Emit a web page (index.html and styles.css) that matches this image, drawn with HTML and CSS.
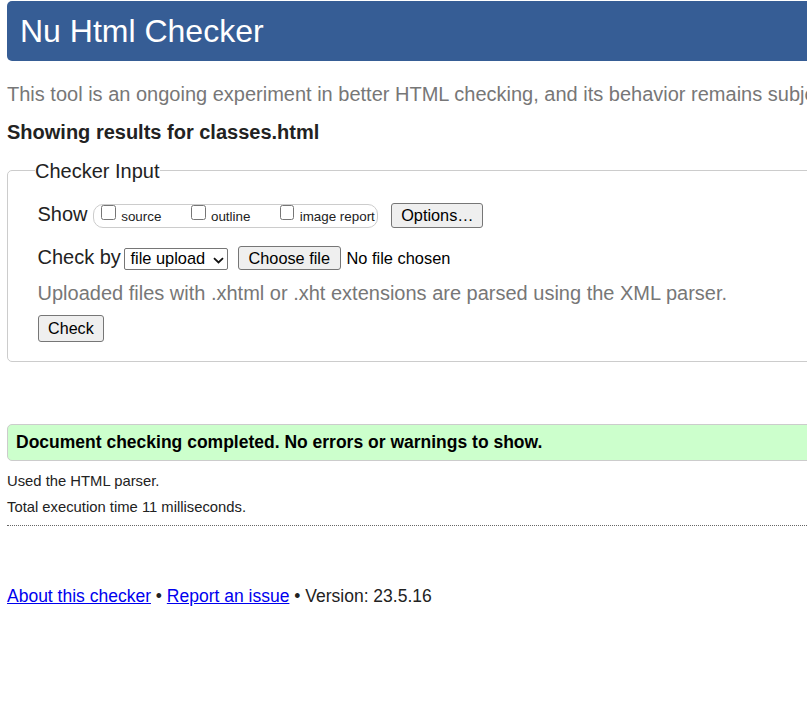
FILE: index.html
```html
<!DOCTYPE html>
<html lang="en">
<head>
<meta charset="utf-8">
<title>Showing results for classes.html - Nu Html Checker</title>
<link rel="stylesheet" href="styles.css">
</head>
<body>
<div class="page">
  <h1 class="title">Nu Html Checker</h1>
  <p class="intro">This tool is an ongoing experiment in better HTML checking, and its behavior remains subject to change</p>
  <p class="results-for">Showing results for classes.html</p>

  <fieldset class="checker">
    <legend class="legend">Checker Input</legend>

    <div class="row row-show">
      <span class="label">Show</span>
      <span class="group">
        <label class="opt opt-source"><span class="cb"></span>source</label>
        <label class="opt opt-outline"><span class="cb"></span>outline</label>
        <label class="opt opt-image"><span class="cb"></span>image report</label>
      </span>
      <button class="btn btn-options" type="button">Options…</button>
    </div>

    <div class="row row-checkby">
      <span class="label">Check by</span>
      <span class="select">file upload<svg class="chev" width="11" height="7" viewBox="0 0 11 7"><path d="M1 1.2 L5.5 5.5 L10 1.2" fill="none" stroke="#111" stroke-width="1.8"/></svg></span>
      <button class="btn btn-file" type="button">Choose file</button>
      <span class="nofile">No file chosen</span>
    </div>

    <p class="hint">Uploaded files with .xhtml or .xht extensions are parsed using the XML parser.</p>

    <div class="row row-submit">
      <button class="btn btn-check" type="button">Check</button>
    </div>
  </fieldset>

  <p class="success">Document checking completed. No errors or warnings to show.</p>
  <p class="meta meta-first">Used the HTML parser.</p>
  <p class="meta meta-second">Total execution time 11 milliseconds.</p>
  <hr class="dots">
  <p class="footer"><a href="#about">About this checker</a> • <a href="#report">Report an issue</a> • Version: 23.5.16</p>
</div>
</body>
</html>
```

FILE: styles.css
```css
html {
  overflow: hidden;
  background: #fff;
}

body {
  margin: 0;
  font-family: "Liberation Sans", Arial, sans-serif;
  color: #222;
}

.page {
  width: 1400px;
  margin: 1px 0 0 7px;
}

.title {
  margin: 0;
  height: 60px;
  padding-left: 13px;
  background: #365d95;
  color: #fff;
  font-size: 32px;
  font-weight: normal;
  line-height: 60px;
  border-radius: 5px;
}

.intro {
  margin: 21px 0 0;
  font-size: 20px;
  line-height: 24px;
  color: #777;
  white-space: nowrap;
}

.results-for {
  margin: 14.4px 0 0;
  font-size: 20px;
  line-height: 24px;
  font-weight: bold;
  color: #222;
}

.checker {
  margin: 14.3px 0 0;
  padding: 0 0 19.6px 29.5px;
  border: 1px solid #ccc;
  border-radius: 5px;
  min-width: 0;
}

.legend {
  margin-left: -2.5px;
  padding: 0;
  font-size: 20px;
  line-height: 24px;
  color: #222;
}

.row {
  display: flex;
  align-items: baseline;
}

.row-show {
  margin-top: 20px;
}

.row-checkby {
  margin-top: 18.5px;
}

.label {
  font-size: 20px;
  line-height: 23px;
}

.group {
  display: block;
  box-sizing: border-box;
  width: 285px;
  height: 23.4px;
  margin-left: 5.3px;
  padding: 0 0 0 7.4px;
  border: 1px solid #ccc;
  border-radius: 10px;
  font-size: 13.4px;
  line-height: 16px;
  white-space: nowrap;
}

.opt {
  display: inline-block;
}

.opt-source {
  width: 86px;
}

.opt-outline {
  width: 85px;
}

.cb {
  display: inline-block;
  box-sizing: border-box;
  width: 14.6px;
  height: 14.4px;
  margin: 0 5.4px 1.7px 0;
  border: 1px solid #767676;
  border-radius: 2.5px;
  background: #fff;
  vertical-align: baseline;
}

.btn {
  font-family: "Liberation Sans", Arial, sans-serif;
  color: #000;
  background: #efefef;
  border: 1px solid #767676;
  border-radius: 3px;
  margin: 0;
}

.btn-options {
  margin-left: 12.7px;
  padding: 2.5px 8.5px 1.5px 9.7px;
  font-size: 16.3px;
  line-height: 19px;
}

.select {
  display: inline-flex;
  align-items: baseline;
  box-sizing: border-box;
  width: 104.4px;
  height: 21.6px;
  margin-left: 3.2px;
  padding: 0 0 0 5.4px;
  border: 1px solid #767676;
  border-radius: 2px;
  font-size: 16.4px;
  line-height: 19.6px;
  color: #000;
  position: relative;
}

.chev {
  position: absolute;
  left: 87.5px;
  top: 7.5px;
}

.btn-file {
  margin-left: 9.6px;
  padding: 2px 9.5px;
  font-size: 16.3px;
  line-height: 18.3px;
}

.nofile {
  margin-left: 6px;
  font-size: 16.4px;
  color: #000;
}

.hint {
  margin: 11.6px 0 0;
  font-size: 20px;
  line-height: 23px;
  color: #777;
  white-space: nowrap;
}

.row-submit {
  margin-top: 10.4px;
}

.btn-check {
  padding: 3px 9.6px;
  font-size: 16.1px;
  line-height: 18.4px;
}

.success {
  margin: 62px 0 0;
  padding: 6.6px 10px 8.3px 8px;
  background: #ccffcc;
  border: 1px solid #ccc;
  border-radius: 5px;
  font-size: 17.5px;
  line-height: 20px;
  font-weight: bold;
  color: #000;
}

.meta {
  margin: 0;
  font-size: 14.8px;
  line-height: 17px;
  color: #222;
}

.meta-first {
  margin-top: 11.4px;
}

.meta-second {
  margin-top: 9px;
}

.dots {
  margin: 9.3px 0 0;
  height: 0;
  border: 0;
  border-top: 1px dotted #666;
}

.footer {
  margin: 60.2px 0 0;
  font-size: 17.5px;
  line-height: 20px;
  color: #222;
}

.footer a {
  color: #00e;
  text-decoration: underline;
}
```
